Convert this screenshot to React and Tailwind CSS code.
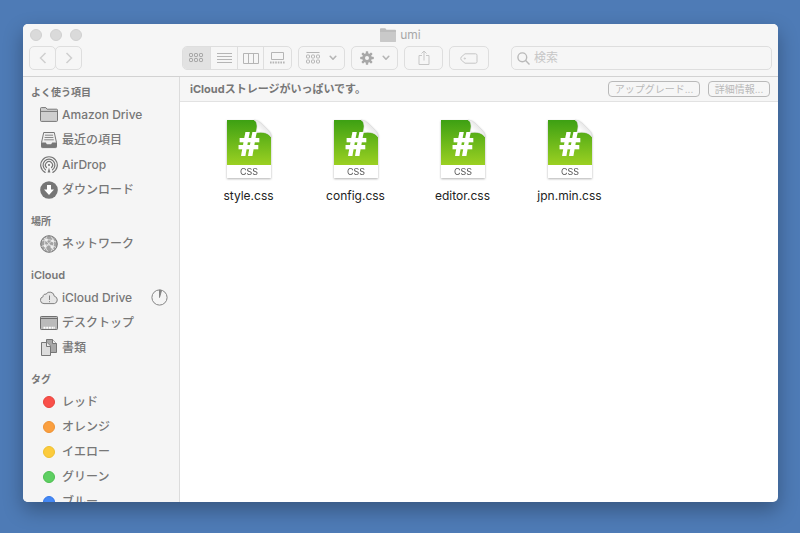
import React from 'react';

const toolButton = 'flex h-6 shrink-0 items-center justify-center rounded-[5px] border border-[#dedede] bg-[#f6f6f6] text-[#b5b5b5]';

const SmallGrid = () => (
    <svg width="15" height="10" viewBox="0 0 15 10" fill="none" stroke="currentColor">
        {[1, 6].map((y) => [1, 6, 11].map((x) => (
            <rect key={`${x}-${y}`} x={x - 0.5} y={y - 0.5} width="3" height="3" rx=".7" />
        )))}
    </svg>
);

const GroupGrid = () => (
    <svg width="15" height="14" viewBox="0 0 15 14" fill="none" stroke="currentColor">
        <path d="M.5 1.500h13" />
        {[4, 9].map((y) => [1, 6, 11].map((x) => (
            <rect key={`${x}-${y}`} x={x - 0.5} y={y} width="3" height="3" rx=".7" />
        )))}
    </svg>
);

const Chevron = () => (
    <svg width="8" height="6" viewBox="0 0 8 6" fill="none" stroke="currentColor" strokeWidth="1.6" strokeLinecap="round" strokeLinejoin="round">
        <path d="M1.2 1.3 4 4.2l2.8-2.9" />
    </svg>
);

const Gear = () => (
    <svg width="14" height="14" viewBox="-7 -7 14 14">
        <g fill="#a8a8a8">
            {[0, 45, 90, 135].map((a) => (
                <rect key={a} x="-1.2" y="-6.8" width="2.4" height="13.6" rx=".6" transform={`rotate(${a})`} />
            ))}
            <circle r="4.8" />
        </g>
        <circle r="2" fill="#f6f6f6" />
    </svg>
);

const FolderIcon = () => (
    <svg width="18" height="18" viewBox="0 0 18 18" fill="#cfcfcf" stroke="#777">
        <path d="M.5 14.5v-12q0-.9.9-.9h4.4l1.3 1.6h9.4q1 0 1 1v10.3q0 .9-1 .9H1.400q-.9 0-.9-.9z" />
        <path d="M.7 5.4h16.6" />
    </svg>
);

const RecentIcon = () => (
    <svg width="18" height="18" viewBox="0 0 18 18">
        <path d="M3.700 1.500h10.600l2.200 10.200v4.100q0 .8-.8.8H2.300q-.8 0-.8-.8v-4.100z" fill="#eee" stroke="#777" />
        <path d="M5 4.200h8M4.600 6.500h8.800M4.200 8.800h9.600" stroke="#888" />
        <path d="M1.500 11.500h4.200l1.200 1.800h4.200l1.200-1.800h4.200v4.300q0 .8-.8.8H2.300q-.8 0-.8-.8z" fill="#777" />
    </svg>
);

const AirDropIcon = () => (
    <svg width="18" height="18" viewBox="0 0 18 18" fill="none" stroke="#777" strokeWidth="1.2" strokeLinecap="round">
        <path d="M5.1 16.4a8.300 8.300 0 1 1 7.800 0" />
        <path d="M5.500 13.800a5.900 5.900 0 1 1 7 0" />
        <path d="M6.500 11.500a3.500 3.500 0 1 1 5 0" />
        <circle cx="9" cy="9" r="1.1" fill="#777" stroke="none" />
        <path d="m7.600 16.500 1.400-5 1.400 5z" fill="#777" stroke="none" />
    </svg>
);

const DownloadIcon = () => (
    <svg width="18" height="18" viewBox="0 0 18 18">
        <circle cx="9" cy="9" r="8.8" fill="#767676" />
        <path d="M7 4h4v4.400h3L9 14 4 8.400h3z" fill="#fff" />
    </svg>
);

const NetworkIcon = () => (
    <svg width="18" height="18" viewBox="0 0 18 18" fill="none" stroke="#777">
        <circle cx="9" cy="9" r="8.3" fill="#a2a2a2" />
        <g stroke="#e8e8e8" strokeWidth=".9">
            <path d="M7 1.500C3.500 6 4 12 8 16.500M11 1.500c3.500 4 3.500 10 0 15M2 6c4-2 9-1.500 14 1M1.500 11.500c5-2.500 10-2 14.500 1M4 3l5 6 5 6M14 3.500 8.500 9 4 15" />
        </g>
        <g fill="#eee" stroke="none">
            <circle cx="6.500" cy="5" r="1.400" />
            <circle cx="12.500" cy="6" r="1.300" />
            <circle cx="5" cy="11" r="1.400" />
            <circle cx="12" cy="12" r="1.500" />
        </g>
    </svg>
);

const CloudIcon = () => (
    <svg width="18" height="18" viewBox="0 0 18 18" fill="#e6e6e6" stroke="#808080">
        <path d="M4 14.600a3.500 3.500 0 0 1-.9-6.900 2.300 2.300 0 0 1 2.900-2.500 4.500 4.500 0 0 1 8.300 2 3.800 3.800 0 0 1 .1 7.400z" />
        <path d="M9.500 6.500v4.500M9.500 12.200v1" />
    </svg>
);

const DesktopIcon = () => (
    <svg width="18" height="18" viewBox="0 0 18 18">
        <rect x=".5" y="2.500" width="17" height="13" rx=".8" fill="#bbb" stroke="#6f6f6f" />
        <path d="M1 4.500h16" stroke="#6f6f6f" />
        <path d="M3.500 13.800h11.500" stroke="#fff" strokeWidth="2" strokeDasharray="2 .7" />
    </svg>
);

const DocumentsIcon = () => (
    <svg width="18" height="18" viewBox="0 0 18 18" stroke="#777">
        <path d="M6.500.5h6l4 4v9h-10z" fill="#a8a8a8" />
        <path d="M12.500.5v4h4" fill="#eee" />
        <path d="M1.500 3.500h5.500l3.500 3.500v9.500h-9z" fill="#ddd" />
        <path d="M6.500 3.500v4h4" fill="#eee" />
    </svg>
);

const tag = (className) => () => <span className={`size-3 rounded-full border ${className}`} />;

const sections = [
    {
        title: 'よく使う項目',
        items: [
            { label: 'Amazon Drive', icon: FolderIcon },
            { label: '最近の項目', icon: RecentIcon },
            { label: 'AirDrop', icon: AirDropIcon },
            { label: 'ダウンロード', icon: DownloadIcon },
        ],
    },
    { title: '場所', items: [{ label: 'ネットワーク', icon: NetworkIcon }] },
    {
        title: 'iCloud',
        latin: true,
        items: [
            { label: 'iCloud Drive', icon: CloudIcon, progress: true },
            { label: 'デスクトップ', icon: DesktopIcon },
            { label: '書類', icon: DocumentsIcon },
        ],
    },
    {
        title: 'タグ',
        items: [
            { label: 'レッド', icon: tag('border-[#e8443b] bg-[#f9504a]') },
            { label: 'オレンジ', icon: tag('border-[#ee9234] bg-[#fa9f3f]') },
            { label: 'イエロー', icon: tag('border-[#eec030] bg-[#fccb3c]') },
            { label: 'グリーン', icon: tag('border-[#4dbf50] bg-[#5ecf62]') },
            { label: 'ブルー', icon: tag('border-[#3577e6] bg-[#4488f5]') },
        ],
    },
];

const files = ['style.css', 'config.css', 'editor.css', 'jpn.min.css'];

const CssFileIcon = () => (
    <svg width="48" height="62" viewBox="0 0 48 62" className="drop-shadow-[0_1px_1px_rgba(0,0,0,0.3)]">
        <defs>
            <linearGradient id="leaf" x1="0" y1="0" x2="0" y2="1">
                <stop offset="0" stopColor="#3da013" />
                <stop offset="1" stopColor="#9bd022" />
            </linearGradient>
            <linearGradient id="fold" x1="0" y1="1" x2=".7" y2=".3">
                <stop offset="0" stopColor="#b9bdb9" />
                <stop offset=".45" stopColor="#fff" />
                <stop offset="1" stopColor="#e2e2e2" />
            </linearGradient>
        </defs>
        <path d="M2 2h28q3 0 5 2l9 9q2 2 2 5v42H2z" fill="#fff" />
        <path d="M2 2h27q3 1 3 6c0 3-.5 5-1.500 7 5-1.500 12-1 15.500 4v28H2z" fill="url(#leaf)" />
        <path d="M29 2q3 1 3 6c0 3-.5 5-1.500 7 5-1.500 12-1 15.500 4 0-3-1-5-3-7l-7-7q-3-3-7-3z" fill="url(#fold)" stroke="#d0d0d0" strokeWidth=".5" />
        <text x="24" y="38" textAnchor="middle" fontFamily="Open Sans, sans-serif" fontWeight="800" fontSize="33" fill="#fff">#</text>
        <text x="24" y="57" textAnchor="middle" fontFamily="Inter, sans-serif" fontSize="9" fill="#555">CSS</text>
    </svg>
);

const Toolbar = () => (
    <div className="flex items-center px-1.5">
        <button aria-label="戻る" className={`${toolButton} w-[27px] text-[#cfcfcf]`}>
            <svg width="8" height="14" viewBox="0 0 8 14" fill="none" stroke="currentColor" strokeWidth="1.5"><path d="M6.500 2 1.500 7l5 5" /></svg>
        </button>
        <button aria-label="進む" className={`${toolButton} -ml-px w-[27px] text-[#cfcfcf]`}>
            <svg width="8" height="14" viewBox="0 0 8 14" fill="none" stroke="currentColor" strokeWidth="1.5"><path d="m1.500 2 5 5-5 5" /></svg>
        </button>
        <div className="ml-[100px] flex h-6 shrink-0 divide-x divide-[#dedede] overflow-hidden rounded-[5px] border border-[#dedede] text-[#b5b5b5]">
            <button aria-label="アイコン" className="flex w-7 items-center justify-center bg-[#e2e2e2] text-[#a0a0a0]"><SmallGrid /></button>
            <button aria-label="リスト" className="flex w-[27px] items-center justify-center">
                <svg width="15" height="12" viewBox="0 0 15 12" stroke="currentColor"><path d="M0 1.500h15M0 4.500h15M0 7.500h15M0 10.500h15" /></svg>
            </button>
            <button aria-label="カラム" className="flex w-[26px] items-center justify-center">
                <svg width="16" height="11" viewBox="0 0 16 11" fill="none" stroke="currentColor"><path d="M.5.5h15v10H.5zM5.500.5v10M10.500.5v10" /></svg>
            </button>
            <button aria-label="ギャラリー" className="flex w-[27px] items-center justify-center">
                <svg width="15" height="12" viewBox="0 0 15 12" fill="none" stroke="currentColor"><path d="M1.500.5h12v7h-12z" /><path d="M0 10.500h15" strokeWidth="2" strokeDasharray="1.600 1" /></svg>
            </button>
        </div>
        <button aria-label="グループ" className={`${toolButton} ml-1.5 w-[47px] gap-2`}><GroupGrid /><Chevron /></button>
        <button aria-label="アクション" className={`${toolButton} ml-1.5 w-[47px] gap-2`}><Gear /><Chevron /></button>
        <button aria-label="共有" className={`${toolButton} ml-1.5 w-[39px] text-[#c6c6c6]`}>
            <svg width="12" height="16" viewBox="0 0 12 16" fill="none" stroke="currentColor"><path d="M4 5.500H1v9h10v-9H8M6 10.500V1M3.500 3.500 6 1l2.500 2.500" /></svg>
        </button>
        <button aria-label="タグ" className={`${toolButton} ml-1.5 w-10 text-[#c6c6c6]`}>
            <svg width="18" height="11" viewBox="0 0 18 11" fill="none" stroke="currentColor"><path d="M5 .8h10.500q1.500 0 1.500 1.500v6.400q0 1.500-1.500 1.500H5L1.200 7Q.3 5.500 1.200 4z" /><circle cx="4.800" cy="5.500" r=".6" /></svg>
        </button>
        <label className="ml-[22px] flex h-6 min-w-0 flex-1 items-center gap-1 rounded-[5px] border border-[#dedede] bg-[#f6f6f6] px-[5px]">
            <svg width="13" height="13" viewBox="0 0 13 13" fill="none" stroke="#b9b9b9" strokeWidth="1.400" className="shrink-0"><circle cx="5.300" cy="5.300" r="4.400" /><path d="m8.600 8.600 3.900 3.900" /></svg>
            <input type="search" aria-label="検索" placeholder="検索" className="min-w-0 flex-1 bg-transparent text-xs outline-none placeholder:text-[#c6c6c6]" />
        </label>
    </div>
);

const Sidebar = () => (
    <nav className="flex w-[157px] shrink-0 flex-col gap-[9px] overflow-hidden border-r border-[#dcdcdc] bg-[#f5f5f5] pt-[5px]">
        {sections.map((section) => (
            <section key={section.title} className="shrink-0">
                <h2 className={`h-5 pl-2 leading-5 font-semibold text-[#777] ${section.latin ? 'text-[11px]' : 'text-[10px]'}`}>{section.title}</h2>
                <ul>
                    {section.items.map(({ label, icon: Icon, progress }) => (
                        <li key={label}>
                            <a href="#" className="flex h-[25px] items-center pr-[11px] pl-[17px] text-xs font-medium text-[#777]">
                                <span className="mr-1 flex w-[18px] shrink-0 justify-center"><Icon /></span>
                                <span className="whitespace-nowrap">{label}</span>
                                {progress && (
                                    <svg width="17" height="17" viewBox="0 0 17 17" className="ml-auto shrink-0" fill="none" stroke="#858585">
                                        <circle cx="8.500" cy="8.500" r="7.600" />
                                        <path d="M8.500 8.500V1l2 .5z" fill="#858585" />
                                    </svg>
                                )}
                            </a>
                        </li>
                    ))}
                </ul>
            </section>
        ))}
    </nav>
);

const noticeButton = 'h-4 rounded-[4px] border border-[#b9b9b9] text-[10px] leading-[14px] whitespace-nowrap text-[#b9b9b9]';

export default function App() {
    return (
        <div className="h-screen bg-[#4e7bb6] pt-6 pr-[22px] pb-[31px] pl-[23px] font-['Inter','Noto_Sans_CJK_JP',sans-serif]">
            <div className="flex h-full flex-col overflow-hidden rounded-[5px] bg-white shadow-[0_8px_20px_rgba(0,0,0,0.3)]">
                <header className="h-[53px] shrink-0 border-b border-[#d2d2d2] bg-[#f6f6f6]">
                    <div className="grid h-[22px] grid-cols-[1fr_auto_1fr] items-center px-[7px]">
                        <div className="flex gap-2">
                            <button aria-label="閉じる" className="size-3 rounded-full border border-[#d0d0d0] bg-[#dadada]" />
                            <button aria-label="しまう" className="size-3 rounded-full border border-[#d0d0d0] bg-[#dadada]" />
                            <button aria-label="拡大" className="size-3 rounded-full border border-[#d0d0d0] bg-[#dadada]" />
                        </div>
                        <h1 className="flex items-center gap-1 text-xs leading-5 text-[#a8a8a8]">
                            <svg width="16" height="14" viewBox="0 0 16 14"><path d="M0 13V1q0-.8.800-.8h4.500l1.200 1.600h8.700q.8 0 .8.8V13q0 .8-.8.8H.8Q0 13.800 0 13z" fill="#bdbdbd" /><path d="M0 4h16v9q0 .8-.8.8H.8Q0 13.800 0 13z" fill="#c9c9c9" /></svg>
                            umi
                        </h1>
                    </div>
                    <Toolbar />
                </header>
                <div className="flex min-h-0 flex-1">
                    <Sidebar />
                    <main className="min-w-0 flex-1">
                        <div className="flex h-[25px] items-center border-b border-[#e2e2e2] bg-[#f6f6f6] pr-2 pl-2.5">
                            <p className="mr-auto text-[11px] font-bold whitespace-nowrap text-[#777]">iCloudストレージがいっぱいです。</p>
                            <button className={`${noticeButton} w-[92px]`}>アップグレード...</button>
                            <button className={`${noticeButton} ml-2 w-[62px]`}>詳細情報...</button>
                        </div>
                        <ul className="flex flex-wrap pt-4 pl-[15px]">
                            {files.map((name) => (
                                <li key={name} className="flex w-[107px] flex-col items-center gap-2">
                                    <CssFileIcon />
                                    <span className="text-xs leading-4 text-[#222]">{name}</span>
                                </li>
                            ))}
                        </ul>
                    </main>
                </div>
            </div>
        </div>
    );
}
